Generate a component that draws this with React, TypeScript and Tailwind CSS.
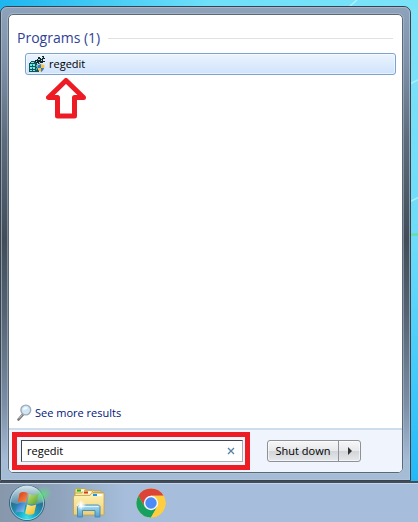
import { useState } from "react";

function RegeditIcon() {
  return (
    <svg width="18" height="17" viewBox="0 0 18 17" aria-hidden="true">
      <g shapeRendering="crispEdges">
        <path d="M1 7h1V6h1V5h4v1h2v2h2v8H1z" fill="#1b5258" />
        <path d="M3 6h3v1H3zM2 8h2v2H2zM5 8h2v2H5zM2 11h2v2H2zM5 11h2v2H5zM2 14h2v1H2zM5 14h2v1H5z" fill="#6af0ea" />
        <path d="M8 9h1v2H8zM8 12h1v2H8zM4 8h1v1H4zM4 11h1v1H4z" fill="#2fb9b7" />
        <path d="M7 4h2V3h1V1h2v1h1v1h1V0h2v2h1v1h-2v2h2v1h-2v1h-3v1h-2V7H8V6H7z" fill="#14272b" />
        <path d="M8 5h1v1H8zM10 3h2v1h-2zM14 1h1v1h-1zM13 4h1v1h-1zM11 6h1v1h-1z" fill="#8ce9e4" />
      </g>
      <path d="M13 7l4 1.500c0 4-1.500 6.500-4 8-2.500-1.500-4-4-4-8z" fill="#dfe6ee" />
      <path d="M13 8v4H9.800C9.500 11 9.500 10 9.600 9.200z" fill="#3c78c8" />
      <path d="M13 8l3.400 1.200c0 1 0 1.800-.3 2.800H13z" fill="#f3c73c" />
      <path d="M9.800 12H13v4c-1.700-1-2.700-2.200-3.200-4z" fill="#f3c73c" />
      <path d="M13 12h3.100c-.5 1.800-1.400 3-3.100 4z" fill="#3c78c8" />
    </svg>
  );
}

function SearchIcon() {
  return (
    <svg width="16" height="17" viewBox="0 0 16 17" aria-hidden="true">
      <path d="M1.500 15.500L6 10.300" stroke="#777" strokeWidth="2.600" strokeLinecap="round" />
      <path d="M2 14.500L5.500 10.500" stroke="#c9c9c9" strokeWidth="1" />
      <circle cx="8.800" cy="6" r="4.900" fill="#cfe6f8" stroke="#a2aab4" strokeWidth="1.400" />
      <path d="M5.800 5.500a3.200 3.200 0 0 1 5-1.800c-1 1.800-3 2.300-5 1.800z" fill="#f5fbff" />
    </svg>
  );
}

function UpArrow() {
  return (
    <svg width="40" height="41" viewBox="0 0 40 41" aria-hidden="true">
      <path
        d="M20 2.500L2.500 19.500H11.500v18.500h17V19.500h9z"
        fill="#fff"
        stroke="#ed1c24"
        strokeWidth="5"
        strokeLinejoin="round"
      />
    </svg>
  );
}

function StartOrb() {
  return (
    <svg width="48" height="38" viewBox="0 0 48 38" aria-hidden="true">
      <defs>
        <radialGradient id="orb" cx="50%" cy="92%" r="88%">
          <stop offset="0" stopColor="#35e4ee" />
          <stop offset="0.3" stopColor="#18a5c0" />
          <stop offset="0.65" stopColor="#2b6f92" />
          <stop offset="1" stopColor="#5d8ba8" />
        </radialGradient>
        <linearGradient id="gloss" x2="0" y2="1">
          <stop offset="0" stopColor="#e6f0f5" stopOpacity="0.9" />
          <stop offset="1" stopColor="#9fc0d0" stopOpacity="0.35" />
        </linearGradient>
        <radialGradient id="glow">
          <stop offset="0" stopColor="#5ce57c" stopOpacity="0.8" />
          <stop offset="1" stopColor="#5ce57c" stopOpacity="0" />
        </radialGradient>
        <linearGradient id="flagRed" x2="1" y2="1">
          <stop offset="0" stopColor="#d83a12" />
          <stop offset="1" stopColor="#fa9150" />
        </linearGradient>
        <linearGradient id="flagGreen" x2="1" y2="1">
          <stop offset="0" stopColor="#c6e47c" />
          <stop offset="1" stopColor="#559d24" />
        </linearGradient>
        <linearGradient id="flagBlue" x2="1" y2="1">
          <stop offset="0" stopColor="#1d60b8" />
          <stop offset="1" stopColor="#8bd0f5" />
        </linearGradient>
        <linearGradient id="flagYellow" x2="1" y2="1">
          <stop offset="0" stopColor="#fff0a0" />
          <stop offset="1" stopColor="#f5b51b" />
        </linearGradient>
      </defs>
      <circle cx="19" cy="19" r="17.500" fill="url(#orb)" stroke="#35627b" />
      <path d="M2.500 18a16.500 16.500 0 0 1 33 0c-9 4-24 4-33 0z" fill="url(#gloss)" />
      <circle cx="19" cy="19" r="16.600" fill="none" stroke="#c3e6ef" strokeOpacity="0.7" />
      <ellipse cx="34" cy="11" rx="11" ry="8" transform="rotate(-35 34 11)" fill="url(#glow)" />
      <path d="M11.500 9.500c3-2 5.500-1.800 8.300-.3L18 18.500c-3-1.400-5.500-1.200-8.300.2z" fill="url(#flagRed)" />
      <path d="M21 10c3 1.500 6 1.700 9.500-.2l-2 9.300c-3 1.700-6 1.600-9.200.1z" fill="url(#flagGreen)" />
      <path d="M9.300 20c3-1.500 5.500-1.600 8.300-.2l-1.900 8.800c-2.700-1.300-5.400-1.200-8.400.4z" fill="url(#flagBlue)" />
      <path d="M19 20.500c3 1.500 6 1.600 9.200 0l-2 9c-3 1.600-6 1.600-9.100 0z" fill="url(#flagYellow)" />
    </svg>
  );
}

function ExplorerIcon() {
  return (
    <svg width="34" height="32" viewBox="0 0 34 32" aria-hidden="true">
      <defs>
        <linearGradient id="folder" x2="0" y2="1">
          <stop offset="0" stopColor="#fff3b8" />
          <stop offset="1" stopColor="#edcf74" />
        </linearGradient>
        <linearGradient id="stand" x2="0" y2="1">
          <stop offset="0" stopColor="#a9def4" />
          <stop offset="1" stopColor="#519fd0" />
        </linearGradient>
        <radialGradient id="shine">
          <stop offset="0" stopColor="#fff" />
          <stop offset="1" stopColor="#fff" stopOpacity="0" />
        </radialGradient>
      </defs>
      <g stroke="#c1a04e" strokeWidth="0.800">
        <path d="M3 27V3l1-1.500h9l1 1.500h7l1 1h7v23z" fill="#f2dc88" />
        <path d="M3 27V6h7l1-2.500h9l1 2h10V27z" fill="#f9e9a4" />
        <path d="M1.500 28V10l1-1.500H18L19.500 6h12.500v22z" fill="url(#folder)" />
      </g>
      <path d="M5 2.500h4v2H5z" fill="#10b81e" />
      <path d="M9 2.500h3v2H9z" fill="#fff" />
      <path d="M12 4.500h4v2h-4z" fill="#d63a24" />
      <path d="M16 4.500h3v2h-3z" fill="#fff" />
      <path d="M21 7h4v2h-4z" fill="#1798e5" />
      <path d="M25 7h5v2h-5z" fill="#fff" />
      <path
        d="M5.500 30V19.500L7 18h19.500l1.500 1.500V30h-5v-6.500H10.500V30z"
        fill="url(#stand)"
        stroke="#4389b4"
        strokeWidth="0.900"
      />
      <path d="M7 19.500h19.500" stroke="#d8f4fd" strokeWidth="1.200" />
      <circle cx="9" cy="18" r="5" fill="url(#shine)" />
      <path d="M9 12l.6 5.400L15 18l-5.400.6L9 24l-.6-5.400L3 18l5.400-.6z" fill="#fff" />
    </svg>
  );
}

function ChromeIcon() {
  return (
    <svg width="30" height="30" viewBox="0 0 30 30" aria-hidden="true">
      <circle cx="15" cy="15" r="14.500" fill="#ffcd40" />
      <path d="M2.440 7.750A14.500 14.500 0 0 1 27.560 7.750H15L8.700 18.600z" fill="#db4437" />
      <path d="M2.440 7.750A14.500 14.500 0 0 0 15 29.500l6.300-10.900L15 22 8.700 18.600z" fill="#18a05e" />
      <path d="M15 7.750h12.560A14.500 14.500 0 0 1 15 29.500l6.300-10.900z" fill="#ffcd40" />
      <circle cx="15" cy="15" r="7.200" fill="#f4f7fa" />
      <circle cx="15" cy="15" r="5.700" fill="#4c8bf5" />
    </svg>
  );
}

function Wallpaper() {
  return (
    <svg
      className="absolute inset-0 h-full w-full"
      viewBox="0 0 418 482"
      preserveAspectRatio="none"
      aria-hidden="true"
    >
      <defs>
        <linearGradient id="skyTop">
          <stop offset="0" stopColor="#1db6f0" />
          <stop offset="0.5" stopColor="#6ee0fa" />
          <stop offset="1" stopColor="#7be3f8" />
        </linearGradient>
        <linearGradient id="skySide" x2="0" y2="1">
          <stop offset="0" stopColor="#7fe3f8" />
          <stop offset="0.5" stopColor="#6cdcfa" />
          <stop offset="0.8" stopColor="#3fc9fa" />
          <stop offset="1" stopColor="#22b8f8" />
        </linearGradient>
      </defs>
      <path d="M0 0h418v20H0z" fill="url(#skyTop)" />
      <path d="M400 8h18v474h-18z" fill="url(#skySide)" />
      <path d="M350 6l7-6M410 84l8-4M410 202l8-4" stroke="#b0f0fc" strokeWidth="1.500" />
      <path d="M410 235h8" stroke="#6fdc94" strokeWidth="2" />
    </svg>
  );
}

export default function App() {
  const [query, setQuery] = useState("regedit");

  return (
    <div className="flex min-h-screen flex-col font-['Open_Sans','Noto_Sans',sans-serif] text-[11px] text-black">
      <main className="relative flex flex-1 pr-[7px] pt-[6px]">
        <Wallpaper />
        <div className="relative flex flex-1 rounded-t-[7px] border border-[#39434e] bg-[linear-gradient(#8ea3bb,#7d90a7_12%,#5d6c7c_28%,#424d58_49%,#566472_65%,#7b8ea5_84%,#a5bcd7_96%)]">
          <div className="flex flex-1 rounded-t-[6px] border border-[#b5c6d8]/60 p-[6px]">
            <section className="flex flex-1 flex-col overflow-hidden rounded-[5px] border border-[#5c6874] bg-white outline outline-1 outline-[#b5c6d8]/50">
              <div className="flex flex-1 flex-col pb-[7px] pl-2 pr-[6px] pt-3">
                <div className="flex items-center gap-2 pr-[3px]">
                  <h2 className="text-[14px] leading-[22px] text-[#2f4296]">Programs (1)</h2>
                  <div className="h-px flex-1 bg-[#e0e0e0]" />
                </div>
                <button
                  type="button"
                  className="ml-2 mt-1 flex h-[22px] items-center gap-[3px] rounded-[3px] border border-[#7da2ce] bg-linear-to-b from-[#ebf4fd] to-[#cfe3fc] pl-[2px] text-left shadow-[inset_0_0_0_1px_rgba(255,255,255,0.5)]"
                >
                  <RegeditIcon />
                  <span>regedit</span>
                </button>
                <div className="flex-1 pl-[29px] pt-[3px]">
                  <UpArrow />
                </div>
                <a href="#results" className="flex items-center gap-[2px] self-start leading-4 text-[#00157a]">
                  <SearchIcon />
                  See more results
                </a>
              </div>
              <footer className="flex items-center gap-[17px] border-t-2 border-[#cfdcec] bg-[#f0f4fc] py-[2px] pl-[3px] pr-[41px]">
                <div className="flex-1 border-[5px] border-[#ed1c24] py-[3px] pl-1 pr-[2px]">
                  <div className="flex h-[22px] items-center border border-[#abadb3] border-l-[#3f464c] border-t-[#3f464c] bg-white">
                    <input
                      type="text"
                      aria-label="Search programs and files"
                      value={query}
                      onChange={(event) => setQuery(event.target.value)}
                      className="w-0 flex-1 pl-[5px] outline-none"
                    />
                    <button
                      type="button"
                      aria-label="Clear search"
                      onClick={() => setQuery("")}
                      className="flex w-[23px] justify-center"
                    >
                      <svg width="8" height="8" viewBox="0 0 8 8" aria-hidden="true">
                        <path d="M1 1l6 6M7 1L1 7" stroke="#5682a6" strokeWidth="1.300" />
                      </svg>
                    </button>
                  </div>
                </div>
                <div className="flex h-[22px] rounded-[3px] border border-[#8e9298] bg-[linear-gradient(#f6f6f7,#e8e9eb_48%,#d3d5d9_52%,#e6e8eb)] shadow-[inset_0_0_0_1px_rgba(255,255,255,0.6)]">
                  <button type="button" className="w-[71px] border-r border-[#8e9298]">
                    Shut down
                  </button>
                  <button type="button" aria-label="More shut down options" className="flex w-[21px] items-center justify-center">
                    <svg width="4" height="8" viewBox="0 0 4 8" aria-hidden="true">
                      <path d="M0 0l4 4-4 4z" fill="#333" />
                    </svg>
                  </button>
                </div>
              </footer>
            </section>
          </div>
        </div>
      </main>
      <nav
        aria-label="Taskbar"
        className="flex h-[41px] items-center border-t-2 border-[#414d5a] bg-[linear-gradient(90deg,#8797ac,#8fa3bc_14%,#a6bedb_30%,#a6bedb)] pl-2 shadow-[inset_0_1px_0_#c5d5e6]"
      >
        <button type="button" aria-label="Start">
          <StartOrb />
        </button>
        <button type="button" aria-label="Windows Explorer" className="ml-4">
          <ExplorerIcon />
        </button>
        <button type="button" aria-label="Google Chrome" className="ml-[30px]">
          <ChromeIcon />
        </button>
      </nav>
    </div>
  );
}
